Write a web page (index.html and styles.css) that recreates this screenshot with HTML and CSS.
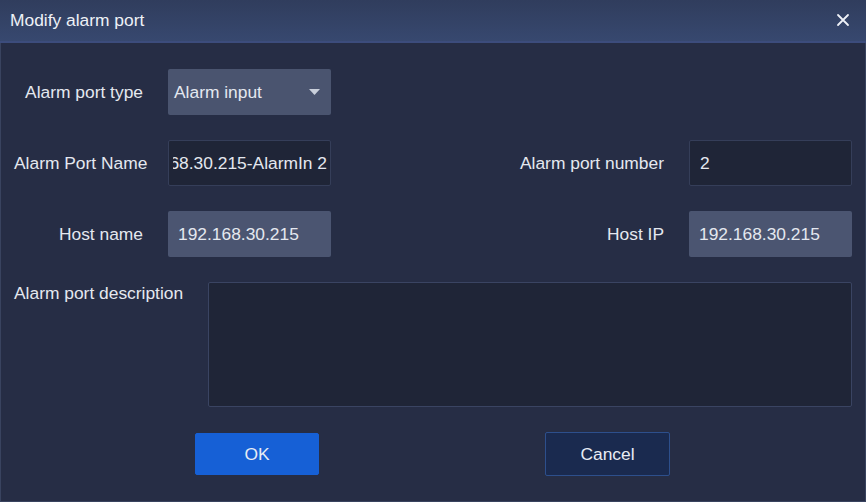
FILE: index.html
```html
<!DOCTYPE html>
<html>
<head>
<meta charset="utf-8">
<link rel="stylesheet" href="styles.css">
</head>
<body>
<div class="dialog">
  <div class="header">
    <span class="title">Modify alarm port</span>
    <svg class="close" width="14" height="14" viewBox="0 0 14 14"><path d="M2 2 L12 12 M12 2 L2 12" stroke="#eef1f7" stroke-width="1.8" stroke-linecap="round"/></svg>
  </div>
  <div class="content">
    <div class="grid">
      <div class="label">Alarm port type</div>
      <div class="field select"><span>Alarm input</span><svg width="11" height="6" viewBox="0 0 11 6"><path d="M0 0 H11 L5.5 6 Z" fill="#c9cfdb"/></svg></div>
      <div></div><div></div>

      <div class="label">Alarm Port Name</div>
      <div class="field dark scrolled"><div class="clip"><span>192.168.30.215-AlarmIn 2</span></div></div>
      <div class="label">Alarm port number</div>
      <div class="field dark">2</div>

      <div class="label">Host name</div>
      <div class="field ro">192.168.30.215</div>
      <div class="label">Host IP</div>
      <div class="field ro">192.168.30.215</div>
    </div>
    <div class="desc-row">
      <div class="desc-label">Alarm port description</div>
      <div class="textarea"></div>
    </div>
    <div class="buttons">
      <button class="btn ok">OK</button>
      <button class="btn cancel">Cancel</button>
    </div>
  </div>
</div>
</body>
</html>
```
FILE: styles.css
```css
html, body {
  margin: 0;
  padding: 0;
  background: #262d45;
}
body {
  font-family: "Liberation Sans", Arial, sans-serif;
  font-size: 17.4px;
  color: #e4e8ef;
}
.dialog {
  width: 866px;
  height: 502px;
  box-sizing: border-box;
  border: 1px solid #39435f;
  border-top: none;
  background: #262d45;
  display: flex;
  flex-direction: column;
}
.header {
  height: 43px;
  box-sizing: border-box;
  background: linear-gradient(#303d5d, #37486f);
  border-bottom: 2px solid #3c4c7c;
  display: flex;
  align-items: center;
  justify-content: space-between;
  padding: 0 16px 0 10px;
  margin: 0 -1px;
}
.title {
  font-size: 17.4px;
  color: #eef1f6;
  padding-bottom: 1px;
}
.close {
  display: block;
  margin-bottom: 2px;
}
.content {
  padding: 26px 13px 0 13px;
  display: flex;
  flex-direction: column;
}
.grid {
  display: grid;
  grid-template-columns: 129px 163px 1fr 163px;
  column-gap: 25px;
  grid-auto-rows: 46px;
  row-gap: 25px;
  align-items: center;
}
.label {
  text-align: right;
  white-space: nowrap;
}
.field {
  height: 46px;
  box-sizing: border-box;
  border-radius: 2px;
  display: flex;
  align-items: center;
  padding: 0 10px;
  white-space: nowrap;
  overflow: hidden;
}
.select {
  background: #4a546f;
  padding: 0 11px 0 6px;
  justify-content: space-between;
}
.dark {
  background: #1f2537;
  border: 1px solid #353e59;
}
.scrolled {
  padding: 0 3px 0 4px;
}
.clip {
  flex: 1;
  display: flex;
  justify-content: flex-end;
  overflow: hidden;
  white-space: nowrap;
}
.ro {
  background: #4b5571;
}
.desc-row {
  display: flex;
  align-items: flex-start;
  margin-top: 25px;
}
.desc-label {
  width: 194px;
  flex: none;
  padding-top: 1px;
  white-space: nowrap;
}
.textarea {
  flex: 1;
  height: 125px;
  box-sizing: border-box;
  background: #1f2537;
  border: 1px solid #3a4462;
  border-radius: 2px;
}
.buttons {
  display: flex;
  margin-top: 25px;
  padding-left: 181px;
  gap: 226px;
}
.btn {
  width: 124px;
  height: 44px;
  box-sizing: border-box;
  font-family: "Liberation Sans", Arial, sans-serif;
  font-size: 17.4px;
  color: #e8ecf4;
  border-radius: 2px;
  cursor: pointer;
}
.ok {
  background: #1660d6;
  border: 1px solid #1660d6;
  margin-top: 1px;
  height: 42px;
}
.cancel {
  width: 125px;
  background: #1a2a4f;
  border: 1px solid #2d4f8c;
}
```
